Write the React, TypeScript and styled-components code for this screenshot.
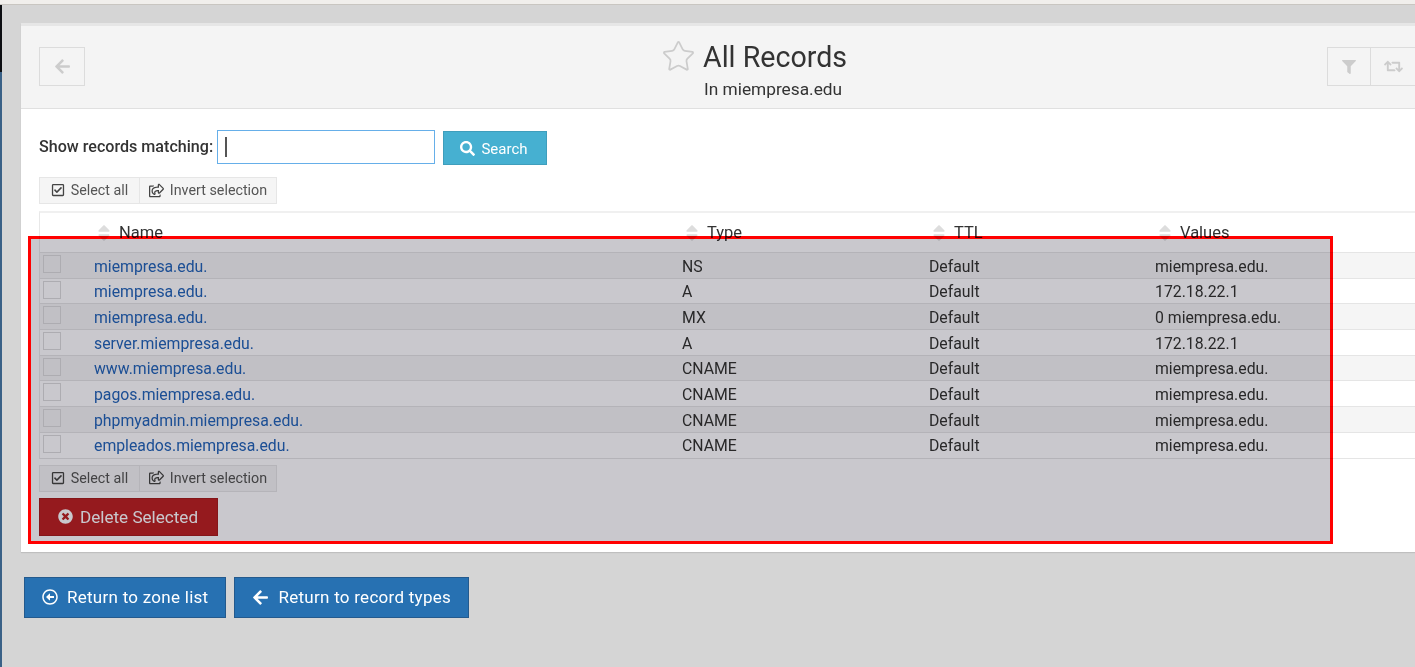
import React from "react";
import styled, { createGlobalStyle } from "styled-components";
import {
  FaArrowLeft,
  FaFilter,
  FaRetweet,
  FaSearch,
  FaRegCheckSquare,
  FaRegShareSquare,
  FaSort,
  FaTimesCircle,
  FaRegArrowAltCircleLeft,
} from "react-icons/fa";
import { Star } from "lucide-react";

const GlobalStyle = createGlobalStyle`
  html, body {
    margin: 0;
    padding: 0;
    height: 100%;
    overflow: hidden;
    background: #d5d5d5;
    font-family: Roboto, "Liberation Sans", sans-serif;
    color: #333;
  }
`;

const Page = styled.div`
  position: relative;
  width: 1415px;
  height: 667px;
  overflow: hidden;
  display: flex;
  flex-direction: column;
`;

const TopStrip = styled.div`
  height: 4px;
  flex: none;
  background: #f1efec;
  border-bottom: 1px solid #c9c6c1;
`;

const Main = styled.div`
  flex: 1;
  display: flex;
`;

const SideEdge = styled.div`
  width: 2px;
  flex: none;
  background: linear-gradient(#0c0e12 0, #0c0e12 67px, #3a6187 67px);
`;

const Content = styled.div`
  flex: 1;
  padding: 18px 0 0 19px;
`;

const Panel = styled.section`
  width: 1395px;
  background: #fff;
  box-shadow: 0 1px 1px rgba(0, 0, 0, 0.1);
`;

const PanelHeader = styled.header`
  display: grid;
  grid-template-columns: 622px 1fr auto;
  height: 82px;
  padding-left: 18px;
  background: #f4f4f4;
  border-top: 3px solid #e6e6e6;
  border-bottom: 1px solid #e0e0e0;
`;

const ToolGroup = styled.div`
  display: flex;
  align-items: flex-start;
`;

const ToolButton = styled.button<{ $width: number }>`
  box-sizing: border-box;
  width: ${(p) => p.$width}px;
  height: 39px;
  margin-top: 21px;
  padding: 0;
  display: flex;
  align-items: center;
  justify-content: center;
  background: #f4f4f4;
  border: 1px solid #dcdcdc;
  color: #ccc;
  & + & {
    margin-left: -1px;
  }
`;

const TitleBlock = styled.div`
  display: flex;
  flex-direction: column;
`;

const TitleRow = styled.div`
  display: flex;
  align-items: center;
  gap: 7px;
  height: 41px;
  margin-top: 10px;
  color: #ccc;
`;

const Title = styled.h1`
  margin: 0;
  font-size: 28.6px;
  font-weight: 400;
  color: #333;
`;

const Subtitle = styled.div`
  margin: 2px 0 0 43px;
  font-size: 17.3px;
  line-height: 20px;
  color: #333;
`;

const PanelBody = styled.div`
  padding: 21px 0 16px 18px;
`;

const SearchRow = styled.form`
  display: flex;
  align-items: flex-start;
  height: 35px;
`;

const SearchLabel = styled.label`
  font-size: 16.1px;
  font-weight: 500;
  line-height: 33px;
  width: 178px;
  color: #333;
`;

const SearchField = styled.div`
  box-sizing: border-box;
  width: 218px;
  height: 34px;
  padding: 6px 7px;
  background: #fff;
  border: 1px solid #66afe9;
`;

const Caret = styled.div`
  width: 2px;
  height: 20px;
  background: #555;
`;

const SearchButton = styled.button`
  box-sizing: border-box;
  width: 104px;
  height: 34px;
  margin: 1px 0 0 8px;
  padding: 1px 2px 0 0;
  display: flex;
  align-items: center;
  justify-content: center;
  gap: 6px;
  background: #46b0d1;
  border: 1px solid #3f9ebc;
  color: #fff;
  font-family: inherit;
  font-size: 15px;
`;

const SelectGroup = styled.div<{ $top: number }>`
  display: flex;
  height: 27px;
  margin-top: ${(p) => p.$top}px;
`;

const SelectLink = styled.button<{ $width: number }>`
  box-sizing: border-box;
  width: ${(p) => p.$width}px;
  display: flex;
  align-items: center;
  justify-content: center;
  gap: 6px;
  padding: 0 0 1px;
  background: #f5f5f5;
  border: 1px solid #e6e6e6;
  color: #555;
  font-family: inherit;
  font-size: 14.3px;
  svg {
    color: #444;
  }
  & + & {
    margin-left: -1px;
  }
`;

const RecordTable = styled.table`
  table-layout: fixed;
  width: 100%;
  border-collapse: separate;
  border-spacing: 0;
  border-top: 2px solid #f0f0f0;
  border-left: 1px solid #e8e8e8;
  margin-top: 7px;
`;

const HeadCell = styled.th`
  height: 40px;
  box-sizing: border-box;
  padding: 0 5px;
  border-bottom: 1px solid #e5e5e5;
  text-align: left;
  font-weight: 400;
  font-size: 16.5px;
  color: #333;
`;

const HeadInner = styled.span`
  display: flex;
  align-items: center;
  gap: 5px;
  svg {
    color: #ddd;
  }
`;

const Row = styled.tr<{ $odd: boolean }>`
  background: ${(p) => (p.$odd ? "#f5f5f5" : "#fff")};
`;

const Cell = styled.td`
  height: 25.7px;
  box-sizing: border-box;
  padding: 1.6px 5px 0;
  border-bottom: 1px solid #e5e5e5;
  font-size: 15.8px;
  color: #333;
  vertical-align: middle;
`;

const CheckCell = styled(Cell)`
  padding: 0 0 0 3px;
  vertical-align: top;
`;

const CheckBox = styled.span`
  display: block;
  box-sizing: border-box;
  width: 18px;
  height: 18px;
  margin-top: 2px;
  border: 1px solid #dcdcdc;
`;

const RecordLink = styled.a`
  color: #2364b9;
  text-decoration: none;
`;

const DeleteButton = styled.button`
  box-sizing: border-box;
  display: flex;
  align-items: center;
  gap: 7px;
  width: 179px;
  height: 38px;
  margin-top: 6px;
  padding: 0 0 0 18px;
  background: #bd2125;
  border: 1px solid #a81c20;
  color: #fff;
  font-family: inherit;
  font-size: 17.1px;
`;

const FooterActions = styled.div`
  display: flex;
  gap: 8px;
  margin: 25px 0 0 3px;
`;

const ReturnButton = styled.button`
  box-sizing: border-box;
  height: 41px;
  display: flex;
  align-items: center;
  gap: 9px;
  padding: 0 17px;
  background: #2771b2;
  border: 1px solid #245a8d;
  color: #fff;
  font-family: inherit;
  font-size: 17px;
  letter-spacing: 0.27px;
`;

const Highlight = styled.div`
  position: absolute;
  left: 28px;
  top: 236px;
  width: 1305px;
  height: 308px;
  box-sizing: border-box;
  border: 3px solid #f00;
  background: #c9c8cd;
  mix-blend-mode: multiply;
  pointer-events: none;
`;

const records = [
  ["miempresa.edu.", "NS", "miempresa.edu."],
  ["miempresa.edu.", "A", "172.18.22.1"],
  ["miempresa.edu.", "MX", "0 miempresa.edu."],
  ["server.miempresa.edu.", "A", "172.18.22.1"],
  ["www.miempresa.edu.", "CNAME", "miempresa.edu."],
  ["pagos.miempresa.edu.", "CNAME", "miempresa.edu."],
  ["phpmyadmin.miempresa.edu.", "CNAME", "miempresa.edu."],
  ["empleados.miempresa.edu.", "CNAME", "miempresa.edu."],
];

const columns = ["Name", "Type", "TTL", "Values"];

function SelectLinks({ top }: { top: number }) {
  return (
    <SelectGroup $top={top}>
      <SelectLink $width={101}>
        <FaRegCheckSquare size={14} />
        Select all
      </SelectLink>
      <SelectLink $width={138}>
        <FaRegShareSquare size={15} />
        Invert selection
      </SelectLink>
    </SelectGroup>
  );
}

export default function App() {
  return (
    <Page>
      <GlobalStyle />
      <TopStrip />
      <Main>
        <SideEdge />
        <Content>
          <Panel>
            <PanelHeader>
              <ToolGroup>
                <ToolButton $width={46} aria-label="Back">
                  <FaArrowLeft size={17} />
                </ToolButton>
              </ToolGroup>
              <TitleBlock>
                <TitleRow>
                  <Star size={35} strokeWidth={1.2} />
                  <Title>All Records</Title>
                </TitleRow>
                <Subtitle>In miempresa.edu</Subtitle>
              </TitleBlock>
              <ToolGroup>
                <ToolButton $width={44} aria-label="Filter">
                  <FaFilter size={14} />
                </ToolButton>
                <ToolButton $width={46} aria-label="Refresh">
                  <FaRetweet size={19} />
                </ToolButton>
              </ToolGroup>
            </PanelHeader>
            <PanelBody>
              <SearchRow>
                <SearchLabel>Show records matching:</SearchLabel>
                <SearchField>
                  <Caret />
                </SearchField>
                <SearchButton type="button">
                  <FaSearch size={15} />
                  Search
                </SearchButton>
              </SearchRow>
              <SelectLinks top={12} />
              <RecordTable>
                <colgroup>
                  <col width="49" />
                  <col width="588" />
                  <col width="247" />
                  <col width="226" />
                  <col />
                </colgroup>
                <thead>
                  <tr>
                    <HeadCell />
                    {columns.map((c) => (
                      <HeadCell key={c}>
                        <HeadInner>
                          <FaSort size={20} />
                          {c}
                        </HeadInner>
                      </HeadCell>
                    ))}
                  </tr>
                </thead>
                <tbody>
                  {records.map(([name, type, value], i) => (
                    <Row key={name + type} $odd={i % 2 === 0}>
                      <CheckCell>
                        <CheckBox />
                      </CheckCell>
                      <Cell>
                        <RecordLink href="#">{name}</RecordLink>
                      </Cell>
                      <Cell>{type}</Cell>
                      <Cell>Default</Cell>
                      <Cell>{value}</Cell>
                    </Row>
                  ))}
                </tbody>
              </RecordTable>
              <SelectLinks top={6} />
              <DeleteButton type="button">
                <FaTimesCircle size={15} />
                Delete Selected
              </DeleteButton>
            </PanelBody>
          </Panel>
          <FooterActions>
            <ReturnButton type="button">
              <FaRegArrowAltCircleLeft size={16} />
              Return to zone list
            </ReturnButton>
            <ReturnButton type="button">
              <FaArrowLeft size={17} />
              Return to record types
            </ReturnButton>
          </FooterActions>
        </Content>
      </Main>
      <Highlight />
    </Page>
  );
}
